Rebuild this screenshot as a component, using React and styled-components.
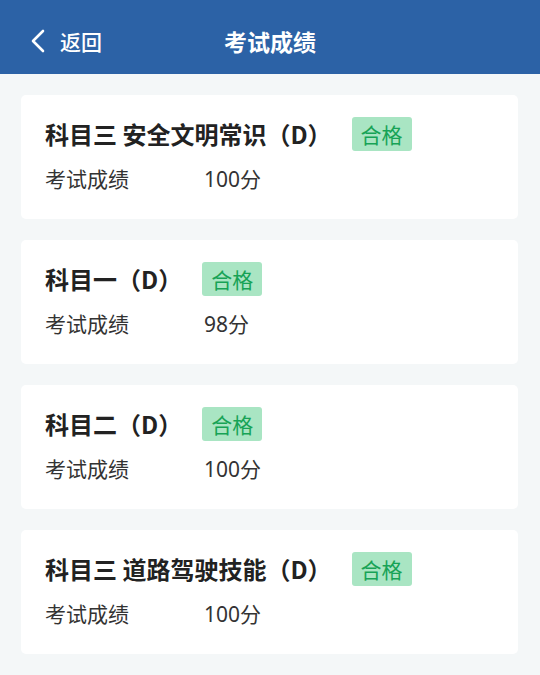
import React from 'react';
import styled, { createGlobalStyle } from 'styled-components';

const GlobalStyle = createGlobalStyle`
  html, body {
    margin: 0;
    padding: 0;
    background: #f4f7f8;
    font-family: "Noto Sans CJK SC", "Noto Sans", sans-serif;
  }
`;

const results = [
  { title: '科目三 安全文明常识（D）', score: '100分' },
  { title: '科目一（D）', score: '98分' },
  { title: '科目二（D）', score: '100分' },
  { title: '科目三 道路驾驶技能（D）', score: '100分' },
];

export default function App() {
  return (
    <Page>
      <GlobalStyle />
      <Header>
        <BackButton>
          <svg width="16" height="24" viewBox="0 0 16 24" fill="none">
            <path d="M13 2 L3 12 L13 22" stroke="#fff" strokeWidth="2.6" strokeLinecap="round" strokeLinejoin="round" />
          </svg>
          <BackLabel>返回</BackLabel>
        </BackButton>
        <HeaderTitle>考试成绩</HeaderTitle>
      </Header>
      <List>
        {results.map((r, i) => (
          <Card key={i}>
            <TitleRow>
              <Title>{r.title}</Title>
              <Badge>合格</Badge>
            </TitleRow>
            <ScoreRow>
              <ScoreLabel>考试成绩</ScoreLabel>
              <ScoreValue>{r.score}</ScoreValue>
            </ScoreRow>
          </Card>
        ))}
      </List>
    </Page>
  );
}

const Page = styled.div`
  width: 540px;
  min-height: 675px;
  background: #f4f7f8;
`;

const Header = styled.div`
  position: relative;
  height: 74px;
  box-sizing: border-box;
  padding-top: 8px;
  background: #2c62a6;
  display: flex;
  align-items: center;
  justify-content: center;
`;

const BackButton = styled.div`
  position: absolute;
  left: 30px;
  top: 8px;
  bottom: 0;
  display: flex;
  align-items: center;
  gap: 14px;
`;

const BackLabel = styled.span`
  color: #fff;
  font-size: 21px;
  font-weight: 500;
  line-height: 1;
`;

const HeaderTitle = styled.div`
  color: #fff;
  font-size: 23px;
  font-weight: 700;
  line-height: 1;
`;

const List = styled.div`
  display: flex;
  flex-direction: column;
  gap: 21px;
  padding: 21px 22px 21px 21px;
`;

const Card = styled.div`
  background: #fff;
  border-radius: 5px;
  height: 124px;
  box-sizing: border-box;
  padding: 22px 24px 0 24px;
  display: flex;
  flex-direction: column;
  gap: 13px;
`;

const TitleRow = styled.div`
  display: flex;
  align-items: center;
  gap: 20px;
  height: 34px;
`;

const Title = styled.div`
  font-size: 24px;
  font-weight: 700;
  color: #222;
  line-height: 1;
  white-space: nowrap;
`;

const Badge = styled.div`
  width: 60px;
  height: 34px;
  border-radius: 3px;
  background: #a9e5c3;
  color: #17a356;
  font-size: 21px;
  display: flex;
  align-items: center;
  justify-content: center;
`;

const ScoreRow = styled.div`
  display: flex;
  align-items: center;
  height: 28px;
  font-size: 21px;
  color: #333;
`;

const ScoreLabel = styled.span`
  width: 159px;
`;

const ScoreValue = styled.span`
  font-family: "Noto Sans", "Noto Sans CJK SC", sans-serif;
`;
